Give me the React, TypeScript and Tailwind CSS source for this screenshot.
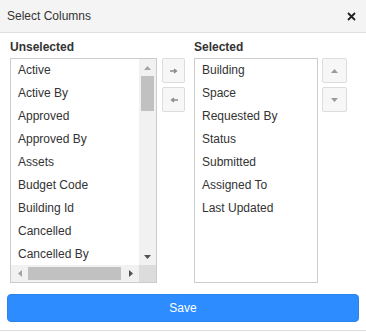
import React from "react";

const unselected = [
  "Active",
  "Active By",
  "Approved",
  "Approved By",
  "Assets",
  "Budget Code",
  "Building Id",
  "Cancelled",
  "Cancelled By",
];
const selected = ["Building", "Space", "Requested By", "Status", "Submitted", "Assigned To", "Last Updated"];

function Tri({ dir, color = "#a3a3a3" }: { dir: "up" | "down" | "left" | "right"; color?: string }) {
  const pts =
    dir === "up" ? "0,4 7,4 3.5,0" : dir === "down" ? "0,0 7,0 3.5,4" : dir === "left" ? "4,0 4,7 0,3.5" : "0,0 0,7 4,3.5";
  const w = dir === "up" || dir === "down" ? 7 : 4;
  const h = dir === "up" || dir === "down" ? 4 : 7;
  return (
    <svg width={w} height={h} viewBox={`0 0 ${w} ${h}`}>
      <polygon points={pts} fill={color} />
    </svg>
  );
}

function Arrow({ dir }: { dir: "right" | "left" }) {
  return (
    <svg width="8" height="6" viewBox="0 0 8 6">
      {dir === "right" ? (
        <path d="M0 3H6M4 1L6.5 3L4 5" stroke="#8a8a8a" strokeWidth="1.3" fill="none" />
      ) : (
        <path d="M8 3H2M4 1L1.5 3L4 5" stroke="#8a8a8a" strokeWidth="1.3" fill="none" />
      )}
    </svg>
  );
}

function SmallBtn({ children }: { children: React.ReactNode }) {
  return (
    <div className="flex items-center justify-center w-full h-[25px] bg-[#f7f7f7] border border-[#dcdcdc] rounded-[2px]">
      {children}
    </div>
  );
}

export default function App() {
  return (
    <div
      className="w-[366px] h-[332px] bg-white text-[#333] text-[12px]"
      style={{ fontFamily: '"Liberation Sans", Arial, sans-serif' }}
    >
      <div className="h-[33px] bg-[#f4f4f4] border-b border-[#dedede] flex items-center justify-between pl-[7px] pr-[10px]">
        <span className="text-[12px] text-[#333]">Select Columns</span>
        <svg width="9" height="9" viewBox="0 0 9 9">
          <path d="M1 1L8 8M8 1L1 8" stroke="#222" strokeWidth="1.8" />
        </svg>
      </div>
      <div className="flex pl-[10px] pt-[7px]">
        <div className="w-[147px] flex flex-col">
          <div className="h-[14px] leading-[14px] font-bold mb-[4px]">Unselected</div>
          <div className="h-[225px] border border-[#cccccc] grid grid-cols-[1fr_17px] grid-rows-[1fr_17px] overflow-hidden">
            <div className="overflow-hidden">
              {unselected.map((t) => (
                <div key={t} className="h-[23px] leading-[23px] pl-[7px] whitespace-nowrap">
                  {t}
                </div>
              ))}
            </div>
            <div className="bg-[#f1f1f1] flex flex-col items-center">
              <div className="h-[17px] flex items-center justify-center">
                <Tri dir="up" />
              </div>
              <div className="w-[13px] h-[35px] bg-[#c1c1c1]" />
              <div className="flex-1" />
              <div className="h-[17px] flex items-center justify-center">
                <Tri dir="down" color="#505050" />
              </div>
            </div>
            <div className="bg-[#f1f1f1] flex items-center">
              <div className="w-[17px] h-[17px] flex items-center justify-center">
                <Tri dir="left" />
              </div>
              <div className="w-[93px] h-[13px] bg-[#c1c1c1]" />
              <div className="flex-1" />
              <div className="w-[17px] h-[17px] flex items-center justify-center">
                <Tri dir="right" color="#505050" />
              </div>
            </div>
            <div className="bg-[#dcdcdc]" />
          </div>
        </div>
        <div className="w-[23px] ml-[5px] pt-[18px] flex flex-col gap-[4px]">
          <SmallBtn>
            <Arrow dir="right" />
          </SmallBtn>
          <SmallBtn>
            <Arrow dir="left" />
          </SmallBtn>
        </div>
        <div className="w-[124px] ml-[9px] flex flex-col">
          <div className="h-[14px] leading-[14px] font-bold mb-[4px]">Selected</div>
          <div className="h-[225px] border border-[#cccccc] overflow-hidden">
            {selected.map((t) => (
              <div key={t} className="h-[23px] leading-[23px] pl-[7px] whitespace-nowrap">
                {t}
              </div>
            ))}
          </div>
        </div>
        <div className="w-[25px] ml-[4px] pt-[18px] flex flex-col gap-[4px]">
          <SmallBtn>
            <Tri dir="up" color="#9a9a9a" />
          </SmallBtn>
          <SmallBtn>
            <Tri dir="down" color="#9a9a9a" />
          </SmallBtn>
        </div>
      </div>
      <div className="px-[7px] pt-[11px] pb-[8px] border-b border-[#dedede]">
        <div className="h-[28px] rounded-[4px] bg-[#2d8cff] border border-[#2a84f0] flex items-center justify-center text-white text-[12px]">
          Save
        </div>
      </div>
    </div>
  );
}
